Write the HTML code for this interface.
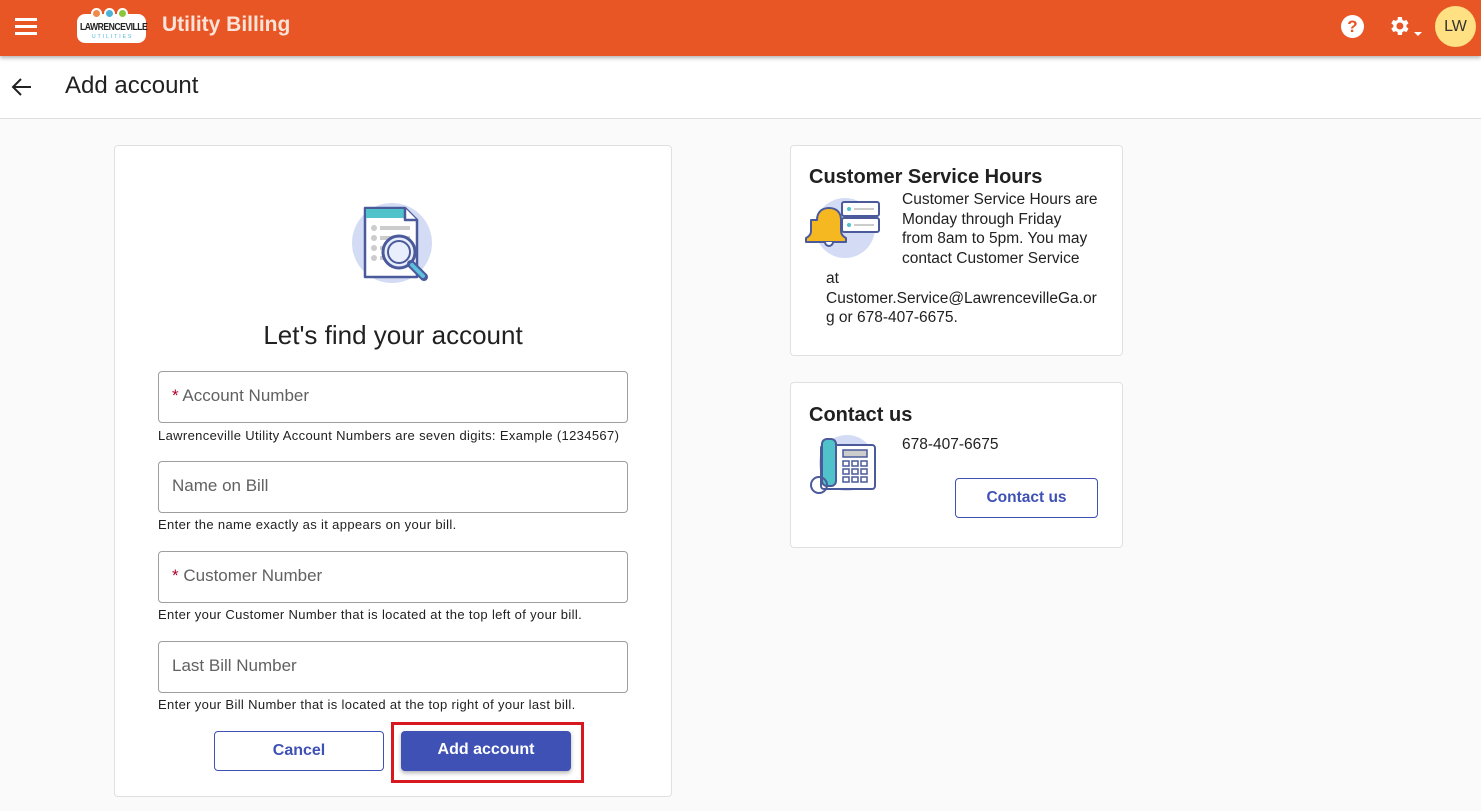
<!DOCTYPE html>
<html><head><style>
*{box-sizing:border-box;margin:0;padding:0}
body{width:1481px;height:811px;overflow:hidden;background:#fafafa;font-family:"Liberation Sans",Roboto,sans-serif;color:#212121;position:relative}
.abs{position:absolute}
.hdr{left:0;top:0;width:1481px;height:56px;background:#e85626;box-shadow:0 2px 4px rgba(0,0,0,.3);z-index:2}
.sub{left:0;top:56px;width:1481px;height:63px;background:#fff;border-bottom:1px solid #e0e0e0}
.card{background:#fff;border:1px solid #e0e0e0;border-radius:4px}
.field{left:43px;width:470px;height:52px;border:1px solid #9e9e9e;border-radius:4px;font-size:17px;color:#616161;padding:14px 13px}
.help{left:43px;font-size:13px;letter-spacing:.35px;color:#212121;white-space:nowrap}
.req{color:#b0002a}
.btn{height:40px;border-radius:4px;font-size:16px;font-weight:bold;text-align:center;line-height:38px}
.rt{font-size:15.5px;line-height:19.7px;color:#212121;white-space:nowrap}
</style></head><body>
<div class="abs hdr">
 <div class="abs" style="left:15px;top:18px;width:22px;height:2.5px;background:#fff;box-shadow:0 7px 0 #fff,0 14px 0 #fff"></div>
 <div class="abs" style="left:77px;top:14px;width:69px;height:29px;background:#fff;border-radius:8px"></div>
 <div class="abs" style="left:91px;top:8px;width:11px;height:11px;border-radius:50%;background:#f08a4b;border:2px solid #fff"></div>
 <div class="abs" style="left:104px;top:8px;width:11px;height:11px;border-radius:50%;background:#4fb3d9;border:2px solid #fff"></div>
 <div class="abs" style="left:117px;top:8px;width:11px;height:11px;border-radius:50%;background:#8cc63f;border:2px solid #fff"></div>
 <div class="abs" style="left:80px;top:21px;font-size:10.5px;font-weight:bold;color:#222;letter-spacing:-.6px;transform:scaleX(.82);transform-origin:left">LAWRENCEVILLE</div>
 <div class="abs" style="left:92px;top:34px;font-size:5px;color:#4fb3d9;letter-spacing:2px">UTILITIES</div>
 <div class="abs" style="left:162px;top:13px;font-size:21px;font-weight:bold;color:#fbe3d8">Utility Billing</div>
 <div class="abs" style="left:1341px;top:15px;width:23px;height:23px;border-radius:50%;background:#fff;color:#e85626;font-weight:bold;font-size:17px;text-align:center;line-height:23px">?</div>
 <svg class="abs" style="left:1387px;top:14px" width="24" height="24" viewBox="0 0 24 24"><path fill="#fff" d="M19.4 13a7.5 7.5 0 0 0 0-2l2.1-1.6-2-3.5-2.5 1a7 7 0 0 0-1.7-1L14.9 3h-4l-.4 2.9a7 7 0 0 0-1.7 1l-2.5-1-2 3.5L6.4 11a7.5 7.5 0 0 0 0 2l-2.1 1.6 2 3.5 2.5-1a7 7 0 0 0 1.7 1l.4 2.9h4l.4-2.9a7 7 0 0 0 1.7-1l2.5 1 2-3.5zM12.9 15.5a3.5 3.5 0 1 1 0-7 3.5 3.5 0 0 1 0 7z"/></svg>
 <div class="abs" style="left:1414px;top:32px;width:0;height:0;border-left:4px solid transparent;border-right:4px solid transparent;border-top:4px solid #fff"></div>
 <div class="abs" style="left:1435px;top:6px;width:41px;height:41px;border-radius:50%;background:#ffe082;color:#333;font-size:16px;text-align:center;line-height:41px">LW</div>
</div>
<div class="abs sub">
 <svg class="abs" style="left:11px;top:20px" width="22" height="22" viewBox="0 0 22 22"><path d="M20 11H3M10 3l-8 8 8 8" fill="none" stroke="#222" stroke-width="2"/></svg>
 <div class="abs" style="left:65px;top:16px;font-size:24px;color:#212121">Add account</div>
</div>

<div class="abs card" style="left:114px;top:145px;width:558px;height:652px">
 <svg class="abs" style="left:232px;top:50px" width="95" height="95" viewBox="0 0 95 95">
  <circle cx="45" cy="47" r="40" fill="#d3dcf4"/>
  <path d="M18 12h40l12 12v57H18z" fill="#fff" stroke="#4a5a9a" stroke-width="2.5" stroke-linejoin="round"/>
  <path d="M19 13h38v9H19z" fill="#4fc3c9"/>
  <path d="M58 12v12h12" fill="#fff" stroke="#4a5a9a" stroke-width="2.5" stroke-linejoin="round"/>
  <g fill="#ccc"><circle cx="27" cy="32" r="3"/><circle cx="27" cy="42" r="3"/><circle cx="27" cy="52" r="3"/><circle cx="27" cy="62" r="3"/><rect x="33" y="30" width="30" height="4"/><rect x="33" y="40" width="30" height="4"/><rect x="33" y="50" width="30" height="4"/><rect x="33" y="60" width="30" height="4"/></g>
  <circle cx="52" cy="56" r="16" fill="#e8eefc" stroke="#4a5a9a" stroke-width="3"/>
  <circle cx="52" cy="56" r="11" fill="none" stroke="#4a5a9a" stroke-width="2"/>
  <path d="M64 68l13 13" stroke="#4a5a9a" stroke-width="8" stroke-linecap="round"/>
  <path d="M65 69l11 11" stroke="#5bc0de" stroke-width="4" stroke-linecap="round"/>
 </svg>
 <div class="abs" style="left:0;width:556px;top:174px;text-align:center;font-size:26px">Let's find your account</div>
 <div class="abs field" style="top:225px"><span class="req">*</span> Account Number</div>
 <div class="abs help" style="top:282px">Lawrenceville Utility Account Numbers are seven digits: Example (1234567)</div>
 <div class="abs field" style="top:315px">Name on Bill</div>
 <div class="abs help" style="top:371px">Enter the name exactly as it appears on your bill.</div>
 <div class="abs field" style="top:405px"><span class="req">*</span> Customer Number</div>
 <div class="abs help" style="top:461px">Enter your Customer Number that is located at the top left of your bill.</div>
 <div class="abs field" style="top:495px">Last Bill Number</div>
 <div class="abs help" style="top:551px">Enter your Bill Number that is located at the top right of your last bill.</div>
 <div class="abs btn" style="left:99px;top:585px;width:170px;border:1px solid #3f51b5;color:#3f51b5">Cancel</div>
 <div class="abs" style="left:276px;top:576px;width:193px;height:61px;border:3px solid #d7191f"></div>
 <div class="abs btn" style="left:286px;top:585px;width:170px;background:#3f51b5;color:#fff;box-shadow:0 2px 4px rgba(0,0,0,.3)">Add account</div>
</div>

<div class="abs card" style="left:790px;top:145px;width:333px;height:211px">
 <div class="abs" style="left:18px;top:20px;font-size:20px;font-weight:bold;color:#212121">Customer Service Hours</div>
 <svg class="abs" style="left:14px;top:48px" width="76" height="70" viewBox="0 0 76 70">
  <circle cx="40" cy="34" r="30" fill="#d3dcf4"/>
  <rect x="37" y="8" width="37" height="14" rx="2" fill="#fff" stroke="#4a5a9a" stroke-width="2"/>
  <rect x="37" y="24" width="37" height="14" rx="2" fill="#fff" stroke="#4a5a9a" stroke-width="2"/>
  <circle cx="44" cy="15" r="2" fill="#4fc3c9"/><circle cx="44" cy="31" r="2" fill="#4fc3c9"/>
  <path d="M49 15h20M49 31h20" stroke="#ccc" stroke-width="2"/>
  <path d="M15 26c0-8 5-12 12-12s12 4 12 12v11c0 4 3 6 5 7v4H4v-4c2-1 5-3 5-7v-11z" transform="translate(-3 0)" fill="#f5b820" stroke="#4a5a9a" stroke-width="2" stroke-linejoin="round"/>
  <path d="M20 48a4 4 0 0 0 8 0" fill="#fff" stroke="#4a5a9a" stroke-width="2"/>
 </svg>
 <div class="abs rt" style="left:111px;top:44px">Customer Service Hours are<br>Monday through Friday<br>from 8am to 5pm. You may<br>contact Customer Service</div>
 <div class="abs rt" style="left:35px;top:123px">at<br>Customer.Service@LawrencevilleGa.or<br>g or 678-407-6675.</div>
</div>

<div class="abs card" style="left:790px;top:382px;width:333px;height:166px">
 <div class="abs" style="left:18px;top:21px;font-size:20px;font-weight:bold;color:#212121">Contact us</div>
 <svg class="abs" style="left:18px;top:50px" width="70" height="66" viewBox="0 0 70 66">
  <circle cx="38" cy="30" r="28" fill="#d3dcf4"/>
  <rect x="12" y="12" width="54" height="44" rx="3" fill="#fff" stroke="#4a5a9a" stroke-width="2"/>
  <rect x="13" y="6" width="14" height="47" rx="5" fill="#4fc3c9" stroke="#4a5a9a" stroke-width="2"/>
  <circle cx="10" cy="52" r="8" fill="none" stroke="#4a5a9a" stroke-width="2"/>
  <rect x="34" y="17" width="24" height="7" fill="#ccc" stroke="#4a5a9a" stroke-width="1.5"/>
  <g fill="#fff" stroke="#4a5a9a" stroke-width="1.5"><rect x="34" y="28" width="6" height="5"/><rect x="43" y="28" width="6" height="5"/><rect x="52" y="28" width="6" height="5"/><rect x="34" y="36" width="6" height="5"/><rect x="43" y="36" width="6" height="5"/><rect x="52" y="36" width="6" height="5"/><rect x="34" y="44" width="6" height="5"/><rect x="43" y="44" width="6" height="5"/><rect x="52" y="44" width="6" height="5"/></g>
 </svg>
 <div class="abs rt" style="left:111px;top:52px">678-407-6675</div>
 <div class="abs btn" style="left:164px;top:95px;width:143px;border:1px solid #3f51b5;color:#3f51b5;font-size:15.5px">Contact us</div>
</div>
</body></html>
